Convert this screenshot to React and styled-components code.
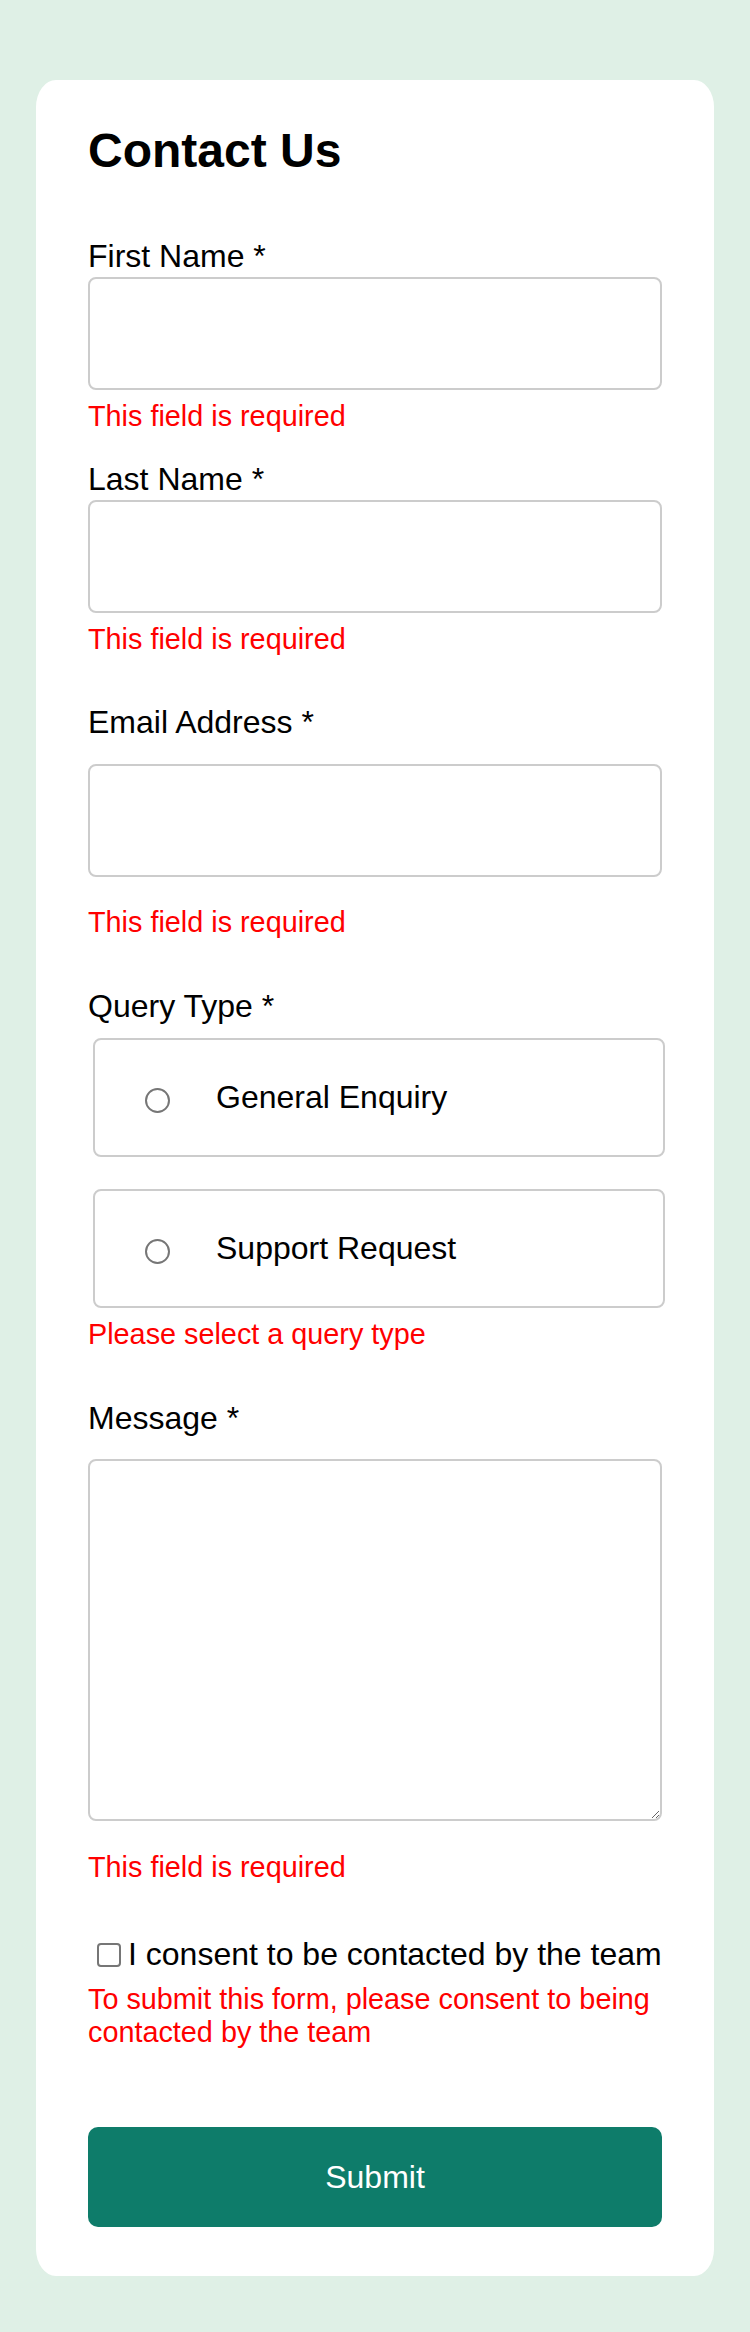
import React from "react";
import styled, { createGlobalStyle } from "styled-components";

const GlobalStyle = createGlobalStyle`
  body {
    margin: 0;
    background: #dff0e6;
    font-family: "Liberation Sans", Arial, sans-serif;
    color: #000;
  }
`;

const Page = styled.div`
  padding: 80px 36px 55px;
`;

const Card = styled.form`
  background: #fff;
  border-radius: 20px / 27px;
  padding: 43px 52px 49px;
`;

const Title = styled.h1`
  margin: 0;
  font-size: 48px;
  font-weight: 700;
  line-height: 55px;
`;

const Field = styled.div`
  margin-top: ${p => p.$gap}px;
`;

const Label = styled.label`
  display: block;
  font-size: 32px;
  line-height: 37px;
`;

const TextInput = styled.input`
  display: block;
  box-sizing: border-box;
  width: 100%;
  height: 113px;
  margin: ${p => p.$labelGap}px 0 0;
  border: 2px solid #ccc;
  border-radius: 8px;
  background: #fff;
  font: inherit;
  font-size: 32px;
  padding: 0 16px;
`;

const MessageInput = styled.textarea`
  display: block;
  box-sizing: border-box;
  width: 100%;
  height: 362px;
  margin: ${p => p.$labelGap}px 0 0;
  border: 2px solid #ccc;
  border-radius: 8px;
  background: #fff;
  font: inherit;
  font-size: 32px;
  padding: 16px;
`;

const ErrorText = styled.p`
  margin: ${p => p.$gap}px 0 0;
  color: #ff0000;
  font-size: 28.8px;
  line-height: 33px;
`;

const RadioList = styled.div`
  display: flex;
  flex-direction: column;
  gap: 32px;
  margin-top: 13px;
`;

const RadioOption = styled.label`
  display: flex;
  align-items: center;
  gap: 46px;
  box-sizing: border-box;
  width: 572px;
  height: 119px;
  margin-left: 5px;
  padding-left: 50px;
  border: 2px solid #ccc;
  border-radius: 8px;
  font-size: 32px;
  line-height: 37px;
`;

const RadioDot = styled.input`
  appearance: none;
  box-sizing: border-box;
  width: 25px;
  height: 25px;
  margin: 6px 0 0;
  border: 2px solid #767676;
  border-radius: 50%;
  background: #fff;
`;

const ConsentRow = styled.label`
  display: flex;
  align-items: center;
  gap: 7px;
  padding-left: 9px;
  font-size: 32px;
  line-height: 37px;
  white-space: nowrap;
`;

const CheckBox = styled.input`
  appearance: none;
  box-sizing: border-box;
  width: 24px;
  height: 24px;
  margin: 0;
  border: 2px solid #767676;
  border-radius: 4px;
  background: #fff;
  flex-shrink: 0;
`;

const SubmitButton = styled.button`
  display: block;
  width: 100%;
  height: 100px;
  margin-top: 78px;
  border: none;
  border-radius: 10px;
  background: #0e7c6a;
  color: #fff;
  font-family: inherit;
  font-size: 32px;
`;

const required = "This field is required";

export default function App() {
  return (
    <Page>
      <GlobalStyle />
      <Card onSubmit={e => e.preventDefault()}>
        <Title>Contact Us</Title>

        <Field $gap={60}>
          <Label>First Name *</Label>
          <TextInput type="text" $labelGap={2} />
          <ErrorText $gap={10}>{required}</ErrorText>
        </Field>

        <Field $gap={28}>
          <Label>Last Name *</Label>
          <TextInput type="text" $labelGap={2} />
          <ErrorText $gap={10}>{required}</ErrorText>
        </Field>

        <Field $gap={48}>
          <Label>Email Address *</Label>
          <TextInput type="email" $labelGap={23} />
          <ErrorText $gap={29}>{required}</ErrorText>
        </Field>

        <Field $gap={49}>
          <Label>Query Type *</Label>
          <RadioList>
            <RadioOption>
              <RadioDot type="radio" name="query" />
              General Enquiry
            </RadioOption>
            <RadioOption>
              <RadioDot type="radio" name="query" />
              Support Request
            </RadioOption>
          </RadioList>
          <ErrorText $gap={10}>Please select a query type</ErrorText>
        </Field>

        <Field $gap={49}>
          <Label>Message *</Label>
          <MessageInput $labelGap={22} />
          <ErrorText $gap={30}>{required}</ErrorText>
        </Field>

        <Field $gap={52}>
          <ConsentRow>
            <CheckBox type="checkbox" />I consent to be contacted by the team
          </ConsentRow>
          <ErrorText $gap={10}>
            To submit this form, please consent to being contacted by the team
          </ErrorText>
        </Field>

        <SubmitButton type="submit">Submit</SubmitButton>
      </Card>
    </Page>
  );
}
